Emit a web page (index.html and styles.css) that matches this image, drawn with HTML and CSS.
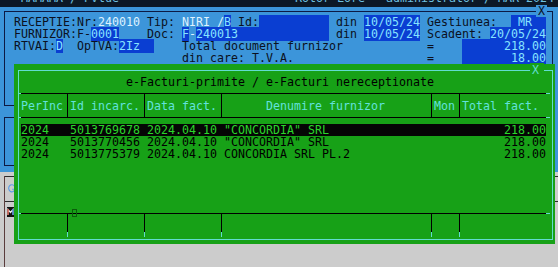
FILE: index.html
```html
<!DOCTYPE html>
<html>
<head>
<meta charset="utf-8">
<link rel="stylesheet" href="styles.css">
</head>
<body>
<div class="screen">
  <div class="topbar"><div class="ln tbl"><span class="tb-l">   MAMAMA / Pvlue</span><span class="tb-r">Rotor Lore - administrator / MAR 2024</span></div></div>
  <div class="console">
    <div class="frame f1">
      <span class="closex">X</span>
      <div class="ln"><span class="lb">RECEPTIE:Nr:</span><span class="vl">240010</span><span class="lb"> Tip: </span><span class="vl">NIRI /</span><span class="hl">B</span><span class="lb"> Id:</span><span class="hl">          </span><span class="lb"> din </span><span class="hl">10/05/24</span><span class="lb"> Gestiunea:  </span><span class="hl"> MR  </span></div>
      <div class="ln"><span class="lb">FURNIZOR:F-</span><span class="hl">0001</span><span class="lb">    Doc: </span><span class="hl">F</span><span class="vl">-</span><span class="hl">240013             </span><span class="lb"> din </span><span class="hl">10/05/24</span><span class="lb"> Scadent: </span><span class="hl">20/05/24</span></div>
      <div class="ln"><span class="lb">RTVAI:</span><span class="hl">D</span><span class="lb">  OpTVA:</span><span class="hl">2Iz  </span><span class="lb">    Total document furnizor            =    </span><span class="hl">      218.00</span></div>
      <div class="ln"><span class="lb">                        din care: T.V.A.                   =    </span><span class="hl">       18.00</span></div>
    </div>
    <div class="frame f2"></div>
  </div>
  <div class="desk">
    <div class="bwin">
      <div class="btab">
        <svg class="gicon" width="8" height="9" viewBox="0 0 8 9"><path d="M6.5 2.2 A3.2 3.6 0 1 0 7 5.2 H4.2" fill="none" stroke="#5b9be6" stroke-width="1.1"/></svg>
      </div>
      <div class="mtile"><svg width="7" height="10" viewBox="0 0 7 10"><rect width="7" height="10" fill="#111"/><path d="M1 8 V2.5 L3.5 5.5 L6 2.5 V8" fill="none" stroke="#e8e8e8" stroke-width="1.2"/><rect x="0.5" y="2" width="1.2" height="6" fill="#d94a3a"/><rect x="5.3" y="2" width="1.2" height="6" fill="#3a7ad9"/></svg></div>
    </div>
  </div>
  <div class="popup">
    <div class="prow ptop"><span class="px">X</span></div>
    <div class="prow ptitle">                e-Facturi-primite / e-Facturi nereceptionate</div>
    <div class="thead-wrap">
      <div class="thead"><span class="c w6">PerInc</span><span class="sep"></span><span class="c w10">Id incarc.</span><span class="sep"></span><span class="c w10">Data fact.</span><span class="sep"></span><span class="c w29 ctr">Denumire furnizor</span><span class="sep"></span><span class="c w3">Mon</span><span class="sep"></span><span class="c w12">Total fact.</span></div>
    </div>
    <div class="trow sel"><span>2024   5013769678 2024.04.10 "CONCORDIA" SRL</span><span>218.00</span></div>
    <div class="trow"><span>2024   5013770456 2024.04.10 "CONCORDIA" SRL</span><span>218.00</span></div>
    <div class="trow"><span>2024   5013775379 2024.04.10 CONCORDIA SRL PL.2</span><span>218.00</span></div>
    <div class="spacer"></div>
    <div class="tfoot-wrap">
      <span class="thumb"></span>
      <div class="tfoot"><span class="w6"></span><span class="sep"></span><span class="w10"></span><span class="sep"></span><span class="w10"></span><span class="sep"></span><span class="w29"></span><span class="sep"></span><span class="w3"></span><span class="sep"></span><span class="w12"></span></div>
    </div>
  </div>
</div>
</body>
</html>
```

FILE: styles.css
```css
* { box-sizing: border-box; margin: 0; padding: 0; }
html, body { margin: 0; background: #cbcbcb; }
.screen {
  position: relative;
  width: 558px;
  height: 267px;
  overflow: hidden;
  display: flex;
  flex-direction: column;
  background: #cbcbcb;
  font-family: "DejaVu Sans Mono", monospace;
  font-size: 11.63px;
  line-height: 12px;
}
.ln { height: 12px; white-space: pre; }

/* top strip (outer title) */
.topbar { height: 7px; background: #0c1826; overflow: hidden; flex: none; }
.tbl { margin-top: -8px; color: #6fc0e0; display: flex; justify-content: space-between; padding-right: 4px; }

/* blue console window */
.console {
  flex: none;
  height: 165px;
  background: #3c95da;
  padding: 4px 5px 0 4px;
}
.frame { border: 1px solid #0c1a44; position: relative; }
.f1 { height: 95px; padding: 4px 0 0 9px; }
.f2 { height: 49px; margin-top: 11px; }
.closex {
  position: absolute;
  right: 5px;
  top: -7px;
  z-index: 3;
  padding: 0 2px;
  background: #3c95da;
  color: #0a0f1e;
  line-height: 12px;
  white-space: pre;
}
.lb { color: #0b1020; }
.vl { color: #dff2ff; }
.hl { color: #86e4ff; background: #0a3ed2; }

/* background browser window */
.desk { flex: 1; background: #cccccc; }
.bwin { margin: 4px 0 0 4px; height: 95px; border-left: 1px solid #5a3c3c; }
.btab { height: 26px; border-top: 1px solid #2b2b2b; border-bottom: 1px solid #2b2b2b; padding: 7px 0 0 3px; }
.gicon { display: block; }
.mtile { margin: 5px 0 0 2px; width: 7px; height: 10px; }
.mtile svg { display: block; }

/* green popup */
.popup {
  position: absolute;
  left: 14px;
  top: 64px;
  width: 541px;
  height: 180px;
  background: #17a117;
  color: #000;
}
.popup::before {
  content: "";
  position: absolute;
  left: 4px;
  top: 6px;
  width: 533px;
  height: 168px;
  border: 1px solid #62dccf;
}
.prow { height: 12px; white-space: pre; }
.ptop { text-align: right; padding-right: 11px; }
.px { position: relative; z-index: 1; background: #17a117; color: #62dccf; padding: 0 5px 0 2px; }
.thead-wrap {
  padding: 5px 0 6px 7px;
  background-image:
    linear-gradient(#62dccf, #62dccf), linear-gradient(#62dccf, #62dccf),
    linear-gradient(#62dccf, #62dccf), linear-gradient(#62dccf, #62dccf);
  background-size: 3px 1px, 4px 1px, 3px 1px, 4px 1px;
  background-position: 4px 5px, 532px 5px, 4px 29px, 532px 29px;
  background-repeat: no-repeat;
}
.thead {
  display: flex;
  width: 525px;
  height: 25px;
  border-top: 1px solid #000;
  border-bottom: 1px solid #000;
}
.c { display: block; padding-top: 6px; white-space: pre; color: #62e2dc; flex: none; }
.ctr { text-align: center; }
.w3 { width: 21px; flex: none; }
.w6 { width: 42px; flex: none; }
.w10 { width: 70px; flex: none; }
.w12 { width: 84px; flex: none; }
.w29 { width: 203px; flex: none; }
.sep {
  flex: none;
  width: 7px;
  background: linear-gradient(90deg, transparent 4px, #000 4px, #000 5px, transparent 5px);
}
.trow {
  margin-left: 7px;
  width: 525px;
  height: 12px;
  display: flex;
  justify-content: space-between;
  white-space: pre;
}
.sel { background: #050505; color: #2bd62b; }
.spacer { height: 48px; }
.tfoot-wrap {
  position: relative;
  padding: 5px 0 0 7px;
  background-image: linear-gradient(#62dccf, #62dccf), linear-gradient(#62dccf, #62dccf);
  background-size: 3px 1px, 4px 1px;
  background-position: 4px 5px, 532px 5px;
  background-repeat: no-repeat;
}
.tfoot { display: flex; width: 525px; height: 24px; border-top: 1px solid #000; }
.tfoot .sep {
  background: linear-gradient(#000 0, #000 18px, #62dccf 18px);
  background-size: 1px 100%;
  background-position: 4px 0;
  background-repeat: no-repeat;
}
.thumb {
  position: absolute;
  left: 58px;
  top: 1px;
  width: 5px;
  height: 8px;
  border: 1px solid #0b5e0b;
}
```
